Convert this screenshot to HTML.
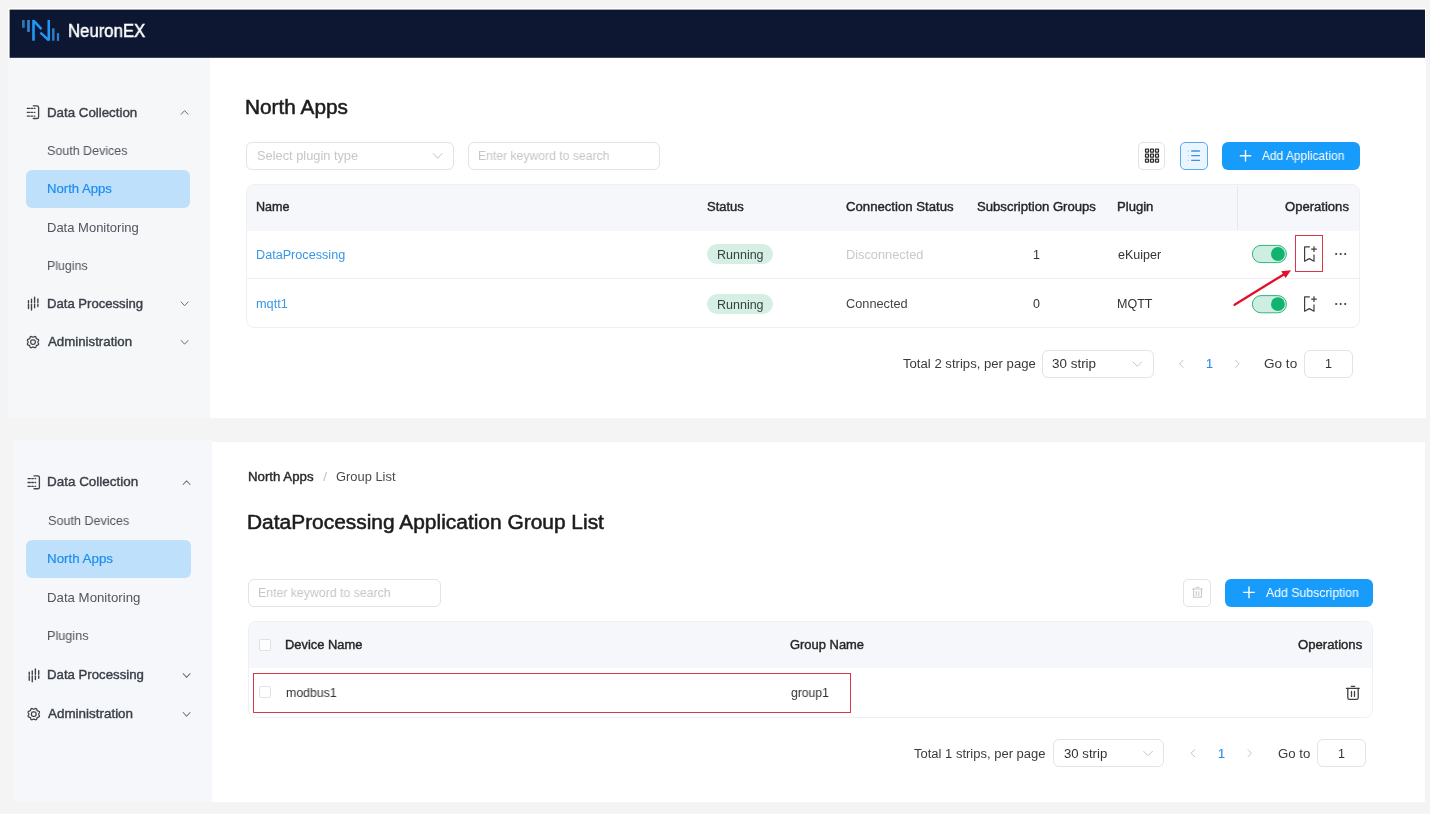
<!DOCTYPE html>
<html><head><meta charset="utf-8"><style>
html,body{margin:0;padding:0;width:1430px;height:814px;overflow:hidden;background:#f4f4f4;font-family:'Liberation Sans', sans-serif;}
.a{position:absolute;box-sizing:border-box;}
.t{position:absolute;white-space:nowrap;transform-origin:0 0;will-change:transform;}
svg{position:absolute;overflow:visible;}
</style></head><body>
<!-- panels -->
<div class="a" style="left:8px;top:8px;width:1418px;height:410px;background:#ffffff"></div>
<div class="a" style="left:8px;top:58px;width:202px;height:360px;background:#f5f7f9"></div>
<svg style="left:0;top:0" width="1430" height="60"><rect x="9.6" y="9.6" width="1415.4" height="48.2" fill="#0e1732"/></svg>
<div class="a" style="left:14px;top:440px;width:198px;height:362px;background:#f5f7fa"></div>
<div class="a" style="left:212px;top:442px;width:1213px;height:360px;background:#ffffff"></div>
<!-- logo -->
<svg style="left:0;top:0" width="80" height="60">
  <rect x="22.1" y="20" width="2.6" height="7.8" fill="#2d78b8"/>
  <rect x="27.1" y="20" width="2.8" height="11.9" fill="#2f7fcb"/>
  <rect x="32.2" y="20" width="2.6" height="20.7" fill="#1e98fb"/>
  <rect x="47.5" y="20" width="2.5" height="20.7" fill="#1e98fb"/>
  <path d="M33.8 20.8 L41.5 29.2" stroke="#1e98fb" stroke-width="2.5" fill="none"/>
  <path d="M40.4 32.6 L48.6 40.1" stroke="#1e98fb" stroke-width="2.5" fill="none"/>
  <rect x="52.1" y="28.3" width="2.4" height="12.4" fill="#2f7fcb"/>
  <rect x="56.9" y="33.1" width="2.2" height="7.8" fill="#2f7fcb"/>
</svg>

<!-- sidebar 1 -->
<div class="a" style="left:26px;top:170px;width:164px;height:38px;border-radius:6px;background:#bfe0fb"></div>
<!-- sidebar 2 -->
<div class="a" style="left:26px;top:540px;width:165px;height:38px;border-radius:6px;background:#bfe0fb"></div>

<!-- content 1 controls -->
<div class="a" style="left:246px;top:142px;width:208px;height:28px;border:1px solid #e2e3e5;border-radius:6px"></div>
<div class="a" style="left:468px;top:142px;width:192px;height:28px;border:1px solid #e2e3e5;border-radius:6px"></div>
<div class="a" style="left:1138px;top:142px;width:27px;height:27.5px;border:1px solid #e2e3e5;border-radius:5px"></div>
<div class="a" style="left:1180px;top:142px;width:27.5px;height:27.5px;border:1px solid #5aa9f4;border-radius:5px;background:#eaf5ff"></div>
<div class="a" style="left:1222px;top:142px;width:138px;height:27.5px;border-radius:6px;background:#189cfc"></div>

<!-- table 1 -->
<div class="a" style="left:245.5px;top:183.5px;width:1114px;height:144.5px;border:1px solid #eef0f3;border-radius:8px;overflow:hidden;background:#fff">
  <div class="a" style="left:0;top:0;width:100%;height:46px;background:#f5f7fa"></div>
  <div class="a" style="left:0;top:93.2px;width:100%;height:1px;background:#eceef2"></div>
  <div class="a" style="left:990.5px;top:1px;width:1px;height:44px;background:#e6e8ec"></div>
</div>
<div class="a" style="left:707px;top:244px;width:66px;height:20px;border-radius:10px;background:#d5efe4"></div>
<div class="a" style="left:707px;top:293.5px;width:66px;height:20px;border-radius:10px;background:#d5efe4"></div>

<!-- content 2 controls -->
<div class="a" style="left:248px;top:578.5px;width:193px;height:28px;border:1px solid #e2e3e5;border-radius:6px"></div>
<div class="a" style="left:1183px;top:578.5px;width:28px;height:28px;border:1px solid #e2e3e5;border-radius:5px"></div>
<div class="a" style="left:1225.4px;top:578.5px;width:147.6px;height:28px;border-radius:6px;background:#189cfc"></div>

<!-- table 2 -->
<div class="a" style="left:248.4px;top:621.2px;width:1124.2px;height:96.4px;border:1px solid #eef0f3;border-radius:8px;overflow:hidden;background:#fff">
  <div class="a" style="left:0;top:0;width:100%;height:46px;background:#f5f7fa"></div>
</div>
<div class="a" style="left:259.3px;top:638.5px;width:12px;height:12px;border:1px solid #dfe1e6;border-radius:2px;background:#fff"></div>
<div class="a" style="left:259.3px;top:686.3px;width:12px;height:12px;border:1px solid #dfe1e6;border-radius:2px;background:#fff"></div>

<!-- paginations -->
<div class="a" style="left:1042px;top:350px;width:111.5px;height:27.5px;border:1px solid #e2e3e5;border-radius:6px"></div>
<div class="a" style="left:1304px;top:350px;width:48.5px;height:27.5px;border:1px solid #e2e3e5;border-radius:6px"></div>
<div class="a" style="left:1053.4px;top:739.4px;width:111px;height:27.5px;border:1px solid #e2e3e5;border-radius:6px"></div>
<div class="a" style="left:1317.3px;top:739.4px;width:48.3px;height:27.5px;border:1px solid #e2e3e5;border-radius:6px"></div>

<!-- red annotation boxes -->
<div class="a" style="left:1295px;top:235px;width:28px;height:37px;border:1.3px solid #d63848"></div>
<div class="a" style="left:253.4px;top:672.8px;width:597.3px;height:40.5px;border:1.3px solid #d63848"></div>

<svg style="left:0px;top:0px" width="200" height="360" viewBox="0 0 200 360">
 <g fill="none" stroke="#3f444b" stroke-width="1.3" stroke-linecap="round">
  <path d="M33.3 105.8 H37 Q38.6 105.8 38.6 107.4 V116.9 Q38.6 118.5 37 118.5 H33.3"/>
  <path d="M27.3 108.4 H29.6 M31 108.4 H32.6 M34.2 108.4 H34.9 M27.3 112.3 H29.6 M31 112.3 H32.6 M34.2 112.3 H34.9 M27.3 116.1 H29.6 M31 116.1 H32.6 M34.2 116.1 H34.9"/>
  <path d="M28.5 300.6 V302.8 M28.5 304.3 V308.6 M31.5 299.3 V302.6 M31.5 304.1 V310 M34.6 297.3 V302.6 M34.6 304.1 V307.7 M37.9 299 V302.6 M37.9 304.1 V306.6" stroke-width="1.4"/>
  <path transform="translate(33 342.1)" d="M4.90 0.00 L4.96 0.33 L5.13 0.68 L5.35 1.06 L5.53 1.48 L5.61 1.90 L5.54 2.30 L5.32 2.62 L4.96 2.86 L4.53 3.03 L4.11 3.15 L3.74 3.28 L3.46 3.46 L3.28 3.74 L3.15 4.11 L3.03 4.53 L2.86 4.96 L2.62 5.32 L2.30 5.54 L1.90 5.61 L1.48 5.53 L1.06 5.35 L0.68 5.13 L0.33 4.96 L0.00 4.90 L-0.33 4.96 L-0.68 5.13 L-1.06 5.35 L-1.48 5.53 L-1.90 5.61 L-2.30 5.54 L-2.62 5.32 L-2.86 4.96 L-3.03 4.53 L-3.15 4.11 L-3.28 3.74 L-3.46 3.46 L-3.74 3.28 L-4.11 3.15 L-4.53 3.03 L-4.96 2.86 L-5.32 2.62 L-5.54 2.30 L-5.61 1.90 L-5.53 1.48 L-5.35 1.06 L-5.13 0.68 L-4.96 0.33 L-4.90 0.00 L-4.96 -0.33 L-5.13 -0.68 L-5.35 -1.06 L-5.53 -1.48 L-5.61 -1.90 L-5.54 -2.30 L-5.32 -2.62 L-4.96 -2.86 L-4.53 -3.03 L-4.11 -3.15 L-3.74 -3.28 L-3.46 -3.46 L-3.28 -3.74 L-3.15 -4.11 L-3.03 -4.53 L-2.86 -4.96 L-2.62 -5.32 L-2.30 -5.54 L-1.90 -5.61 L-1.48 -5.53 L-1.06 -5.35 L-0.68 -5.13 L-0.33 -4.96 L-0.00 -4.90 L0.33 -4.96 L0.68 -5.13 L1.06 -5.35 L1.48 -5.53 L1.90 -5.61 L2.30 -5.54 L2.62 -5.32 L2.86 -4.96 L3.03 -4.53 L3.15 -4.11 L3.28 -3.74 L3.46 -3.46 L3.74 -3.28 L4.11 -3.15 L4.53 -3.03 L4.96 -2.86 L5.32 -2.62 L5.54 -2.30 L5.61 -1.90 L5.53 -1.48 L5.35 -1.06 L5.13 -0.68 L4.96 -0.33 L4.90 -0.00Z"/>
  <rect x="30.7" y="339.8" width="4.6" height="4.6" rx="1.8"/>
 </g>
 <g fill="none" stroke="#6b7078" stroke-width="1" stroke-linecap="round" stroke-linejoin="round">
  <path d="M181.2 114.3 L184.6 110.6 L188 114.3"/>
  <path d="M181.2 302 L184.6 305.7 L188 302"/>
  <path d="M181.2 340.5 L184.6 344.2 L188 340.5"/>
 </g>
</svg>
<div class="a" style="left:0;top:0;width:220px;height:814px;transform-origin:0 0;transform:translate(0.5px,369.3px) scale(1.008)">
<svg style="left:0;top:0" width="200" height="360" viewBox="0 0 200 360">
 <g fill="none" stroke="#3f444b" stroke-width="1.3" stroke-linecap="round">
  <path d="M33.3 105.8 H37 Q38.6 105.8 38.6 107.4 V116.9 Q38.6 118.5 37 118.5 H33.3"/>
  <path d="M27.3 108.4 H29.6 M31 108.4 H32.6 M34.2 108.4 H34.9 M27.3 112.3 H29.6 M31 112.3 H32.6 M34.2 112.3 H34.9 M27.3 116.1 H29.6 M31 116.1 H32.6 M34.2 116.1 H34.9"/>
  <path d="M28.5 300.6 V302.8 M28.5 304.3 V308.6 M31.5 299.3 V302.6 M31.5 304.1 V310 M34.6 297.3 V302.6 M34.6 304.1 V307.7 M37.9 299 V302.6 M37.9 304.1 V306.6" stroke-width="1.4"/>
  <path transform="translate(33 342.1)" d="M4.90 0.00 L4.96 0.33 L5.13 0.68 L5.35 1.06 L5.53 1.48 L5.61 1.90 L5.54 2.30 L5.32 2.62 L4.96 2.86 L4.53 3.03 L4.11 3.15 L3.74 3.28 L3.46 3.46 L3.28 3.74 L3.15 4.11 L3.03 4.53 L2.86 4.96 L2.62 5.32 L2.30 5.54 L1.90 5.61 L1.48 5.53 L1.06 5.35 L0.68 5.13 L0.33 4.96 L0.00 4.90 L-0.33 4.96 L-0.68 5.13 L-1.06 5.35 L-1.48 5.53 L-1.90 5.61 L-2.30 5.54 L-2.62 5.32 L-2.86 4.96 L-3.03 4.53 L-3.15 4.11 L-3.28 3.74 L-3.46 3.46 L-3.74 3.28 L-4.11 3.15 L-4.53 3.03 L-4.96 2.86 L-5.32 2.62 L-5.54 2.30 L-5.61 1.90 L-5.53 1.48 L-5.35 1.06 L-5.13 0.68 L-4.96 0.33 L-4.90 0.00 L-4.96 -0.33 L-5.13 -0.68 L-5.35 -1.06 L-5.53 -1.48 L-5.61 -1.90 L-5.54 -2.30 L-5.32 -2.62 L-4.96 -2.86 L-4.53 -3.03 L-4.11 -3.15 L-3.74 -3.28 L-3.46 -3.46 L-3.28 -3.74 L-3.15 -4.11 L-3.03 -4.53 L-2.86 -4.96 L-2.62 -5.32 L-2.30 -5.54 L-1.90 -5.61 L-1.48 -5.53 L-1.06 -5.35 L-0.68 -5.13 L-0.33 -4.96 L-0.00 -4.90 L0.33 -4.96 L0.68 -5.13 L1.06 -5.35 L1.48 -5.53 L1.90 -5.61 L2.30 -5.54 L2.62 -5.32 L2.86 -4.96 L3.03 -4.53 L3.15 -4.11 L3.28 -3.74 L3.46 -3.46 L3.74 -3.28 L4.11 -3.15 L4.53 -3.03 L4.96 -2.86 L5.32 -2.62 L5.54 -2.30 L5.61 -1.90 L5.53 -1.48 L5.35 -1.06 L5.13 -0.68 L4.96 -0.33 L4.90 -0.00Z"/>
  <rect x="30.7" y="339.8" width="4.6" height="4.6" rx="1.8"/>
 </g>
 <g fill="none" stroke="#6b7078" stroke-width="1" stroke-linecap="round" stroke-linejoin="round">
  <path d="M181.2 114.3 L184.6 110.6 L188 114.3"/>
  <path d="M181.2 302 L184.6 305.7 L188 302"/>
  <path d="M181.2 340.5 L184.6 344.2 L188 340.5"/>
 </g>
</svg></div>

<svg style="left:0;top:0" width="1430" height="814">
 <!-- select chevron -->
 <g fill="none" stroke="#c0c4cc" stroke-width="1" stroke-linecap="round" stroke-linejoin="round">
  <path d="M433.3 153.6 L437.7 158.2 L442.1 153.6"/>
  <path d="M1133 362 L1137.3 366.3 L1141.6 362"/>
  <path d="M1143.8 751.4 L1148.1 755.7 L1152.4 751.4"/>
  <path d="M1183 360.2 L1179.6 363.8 L1183 367.4"/>
  <path d="M1235.6 360.2 L1239 363.8 L1235.6 367.4"/>
  <path d="M1194.6 749.6 L1191.2 753.2 L1194.6 756.8"/>
  <path d="M1248 749.6 L1251.4 753.2 L1248 756.8"/>
 </g>
 <!-- grid icon -->
 <g fill="none" stroke="#2b2b2b" stroke-width="1.25">
  <rect x="1145.5" y="149.1" width="3" height="3" rx="0.3"/><rect x="1150.5" y="149.1" width="3" height="3" rx="0.3"/><rect x="1155.5" y="149.1" width="3" height="3" rx="0.3"/>
  <rect x="1145.5" y="154.1" width="3" height="3" rx="0.3"/><rect x="1150.5" y="154.1" width="3" height="3" rx="0.3"/><rect x="1155.5" y="154.1" width="3" height="3" rx="0.3"/>
  <rect x="1145.5" y="159.1" width="3" height="3" rx="0.3"/><rect x="1150.5" y="159.1" width="3" height="3" rx="0.3"/><rect x="1155.5" y="159.1" width="3" height="3" rx="0.3"/>
 </g>
 <!-- list icon -->
 <g stroke="#3d90e2" stroke-width="1.3" fill="none">
  <path d="M1191.2 151 H1199.9 M1191.2 155.6 H1199.9 M1191.2 160.4 H1199.9"/>
  <path d="M1187.6 151 H1188.6 M1187.6 155.6 H1188.6 M1187.6 160.4 H1188.6" stroke="#9cc6ef"/>
 </g>
 <!-- plus icons -->
 <g stroke="#ffffff" stroke-width="1.4" fill="none">
  <path d="M1245.5 150 V161.4 M1239.8 155.7 H1251.2"/>
  <path d="M1249 586.6 V598.2 M1243.2 592.4 H1254.8"/>
 </g>
 <!-- switches -->
 <g>
  <rect x="1252.4" y="245.4" width="34" height="17.2" rx="8.6" fill="#cdeee0" stroke="#2fb77c" stroke-width="1"/>
  <circle cx="1277.9" cy="254" r="6.9" fill="#12b36f"/>
  <rect x="1252.4" y="295.6" width="34" height="17.2" rx="8.6" fill="#cdeee0" stroke="#2fb77c" stroke-width="1"/>
  <circle cx="1277.9" cy="304.2" r="6.9" fill="#12b36f"/>
 </g>
 <!-- bookmark icons -->
 <g fill="none" stroke="#3f3f3f" stroke-width="1.2" stroke-linejoin="round">
  <path d="M1309.8 246.9 H1304.6 V261.2 L1309.3 258.6 L1314 261.2 V254.6"/>
  <path d="M1314 246.3 V252 M1311.2 249.1 H1316.8"/>
  <path d="M1309.8 296.9 H1304.6 V311.2 L1309.3 308.6 L1314 311.2 V304.6"/>
  <path d="M1314 296.3 V302 M1311.2 299.1 H1316.8"/>
 </g>
 <!-- dots -->
 <g fill="#3a3a3a">
  <circle cx="1336.2" cy="254" r="1.1"/><circle cx="1340.7" cy="254" r="1.1"/><circle cx="1345.2" cy="254" r="1.1"/>
  <circle cx="1336.2" cy="304" r="1.1"/><circle cx="1340.7" cy="304" r="1.1"/><circle cx="1345.2" cy="304" r="1.1"/>
 </g>
 <!-- arrow -->
 <g>
  <path d="M1234.6 304.8 L1285 273.7" stroke="#e3102b" stroke-width="2.3" stroke-linecap="round"/>
  <path d="M1291 270.2 L1281.2 271.2 L1285.6 278 Z" fill="#e3102b"/>
 </g>
 <!-- trash icons -->
 <g fill="none" stroke="#404040" stroke-width="1.3" stroke-linecap="round" stroke-linejoin="round">
  <path d="M1346.4 688.4 H1359.2"/>
  <path d="M1351.3 686.3 H1354.7"/>
  <path d="M1347.8 688.4 V697.8 Q1347.8 699.4 1349.4 699.4 H1356.6 Q1358.2 699.4 1358.2 697.8 V688.4"/>
  <path d="M1351.5 691.4 V696.4 M1354.5 691.4 V696.4"/>
 </g>
 <g fill="none" stroke="#c6c8cc" stroke-width="1.1" stroke-linecap="round" stroke-linejoin="round">
  <path d="M1192.5 589 H1202.5"/>
  <path d="M1196 587.3 H1199"/>
  <path d="M1193.6 589 V597.3 H1201.4 V589"/>
  <path d="M1196.2 591.6 V595.4 M1198.8 591.6 V595.4"/>
 </g>
</svg>
<div class="t" style="left:67.79px;top:21.64px;font-size:18.5px;line-height:18.5px;color:#ffffff;-webkit-text-stroke:0.50px #ffffff;transform:scaleX(0.9043);">NeuronEX</div>
<div class="t" style="left:46.66px;top:105.70px;font-size:13px;line-height:13px;color:#3a3f47;-webkit-text-stroke:0.40px #3a3f47;transform:scaleX(1.0230);">Data Collection</div>
<div class="t" style="left:47.31px;top:143.80px;font-size:13px;line-height:13px;color:#50555c;transform:scaleX(0.9601);">South Devices</div>
<div class="t" style="left:46.87px;top:182.20px;font-size:13px;line-height:13px;color:#1d8cf0;-webkit-text-stroke:0.20px #1d8cf0;transform:scaleX(1.0093);">North Apps</div>
<div class="t" style="left:46.88px;top:220.50px;font-size:13px;line-height:13px;color:#50555c;">Data Monitoring</div>
<div class="t" style="left:46.93px;top:258.80px;font-size:13px;line-height:13px;color:#50555c;transform:scaleX(0.9511);">Plugins</div>
<div class="t" style="left:46.68px;top:296.90px;font-size:13px;line-height:13px;color:#3a3f47;-webkit-text-stroke:0.40px #3a3f47;transform:scaleX(1.0082);">Data Processing</div>
<div class="t" style="left:47.70px;top:335.40px;font-size:13px;line-height:13px;color:#3a3f47;-webkit-text-stroke:0.40px #3a3f47;transform:scaleX(1.0204);">Administration</div>
<div class="t" style="left:46.85px;top:475.00px;font-size:13px;line-height:13px;color:#3a3f47;-webkit-text-stroke:0.40px #3a3f47;transform:scaleX(1.0346);">Data Collection</div>
<div class="t" style="left:47.51px;top:513.50px;font-size:13px;line-height:13px;color:#50555c;transform:scaleX(0.9698);">South Devices</div>
<div class="t" style="left:46.86px;top:552.00px;font-size:13px;line-height:13px;color:#1d8cf0;-webkit-text-stroke:0.20px #1d8cf0;transform:scaleX(1.0266);">North Apps</div>
<div class="t" style="left:46.67px;top:590.80px;font-size:13px;line-height:13px;color:#50555c;transform:scaleX(1.0175);">Data Monitoring</div>
<div class="t" style="left:46.71px;top:629.30px;font-size:13px;line-height:13px;color:#50555c;transform:scaleX(0.9729);">Plugins</div>
<div class="t" style="left:46.67px;top:668.00px;font-size:13px;line-height:13px;color:#3a3f47;-webkit-text-stroke:0.40px #3a3f47;transform:scaleX(1.0157);">Data Processing</div>
<div class="t" style="left:47.70px;top:706.80px;font-size:13px;line-height:13px;color:#3a3f47;-webkit-text-stroke:0.40px #3a3f47;transform:scaleX(1.0326);">Administration</div>
<div class="t" style="left:244.97px;top:97.15px;font-size:20.5px;line-height:20.5px;color:#1c1c1c;-webkit-text-stroke:0.52px #1c1c1c;transform:scaleX(1.0149);">North Apps</div>
<div class="t" style="left:256.50px;top:150.22px;font-size:12.5px;line-height:12.5px;color:#c4c6ca;transform:scaleX(1.0248);">Select plugin type</div>
<div class="t" style="left:478.25px;top:149.82px;font-size:12.5px;line-height:12.5px;color:#c4c6ca;transform:scaleX(0.9752);">Enter keyword to search</div>
<div class="t" style="left:1262.10px;top:150.22px;font-size:12.5px;line-height:12.5px;color:#ffffff;transform:scaleX(0.9563);">Add Application</div>
<div class="t" style="left:255.72px;top:200.82px;font-size:12.5px;line-height:12.5px;color:#262626;-webkit-text-stroke:0.40px #262626;transform:scaleX(1.0044);">Name</div>
<div class="t" style="left:707.39px;top:200.82px;font-size:12.5px;line-height:12.5px;color:#262626;-webkit-text-stroke:0.40px #262626;transform:scaleX(1.0388);">Status</div>
<div class="t" style="left:846.28px;top:200.82px;font-size:12.5px;line-height:12.5px;color:#262626;-webkit-text-stroke:0.40px #262626;transform:scaleX(1.0527);">Connection Status</div>
<div class="t" style="left:977.39px;top:200.82px;font-size:12.5px;line-height:12.5px;color:#262626;-webkit-text-stroke:0.40px #262626;transform:scaleX(1.0501);">Subscription Groups</div>
<div class="t" style="left:1117.38px;top:200.82px;font-size:12.5px;line-height:12.5px;color:#262626;-webkit-text-stroke:0.40px #262626;transform:scaleX(1.0463);">Plugin</div>
<div class="t" style="left:1284.79px;top:200.82px;font-size:12.5px;line-height:12.5px;color:#262626;-webkit-text-stroke:0.40px #262626;transform:scaleX(1.0454);">Operations</div>
<div class="t" style="left:255.71px;top:248.72px;font-size:12.5px;line-height:12.5px;color:#3897e6;transform:scaleX(1.0109);">DataProcessing</div>
<div class="t" style="left:717.03px;top:249.12px;font-size:12.5px;line-height:12.5px;color:#36433c;">Running</div>
<div class="t" style="left:845.90px;top:248.72px;font-size:12.5px;line-height:12.5px;color:#c9c9c9;transform:scaleX(1.0221);">Disconnected</div>
<div class="t" style="left:1033.09px;top:248.72px;font-size:12.5px;line-height:12.5px;color:#333;">1</div>
<div class="t" style="left:1118.01px;top:248.72px;font-size:12.5px;line-height:12.5px;color:#333;transform:scaleX(0.9945);">eKuiper</div>
<div class="t" style="left:255.91px;top:297.92px;font-size:12.5px;line-height:12.5px;color:#3897e6;transform:scaleX(1.0175);">mqtt1</div>
<div class="t" style="left:717.03px;top:298.52px;font-size:12.5px;line-height:12.5px;color:#36433c;">Running</div>
<div class="t" style="left:846.30px;top:297.92px;font-size:12.5px;line-height:12.5px;color:#444;transform:scaleX(1.0207);">Connected</div>
<div class="t" style="left:1033.08px;top:297.92px;font-size:12.5px;line-height:12.5px;color:#333;">0</div>
<div class="t" style="left:1117.43px;top:297.92px;font-size:12.5px;line-height:12.5px;color:#333;transform:scaleX(0.9908);">MQTT</div>
<div class="t" style="left:902.59px;top:357.62px;font-size:12.5px;line-height:12.5px;color:#3a3a3a;transform:scaleX(1.0504);">Total 2 strips, per page</div>
<div class="t" style="left:1052.48px;top:357.62px;font-size:12.5px;line-height:12.5px;color:#333;transform:scaleX(1.0750);">30 strip</div>
<div class="t" style="left:1205.89px;top:357.62px;font-size:12.5px;line-height:12.5px;color:#2b8fe8;-webkit-text-stroke:0.20px #2b8fe8;">1</div>
<div class="t" style="left:1264.36px;top:357.62px;font-size:12.5px;line-height:12.5px;color:#3a3a3a;transform:scaleX(1.0855);">Go to</div>
<div class="t" style="left:1324.69px;top:357.62px;font-size:12.5px;line-height:12.5px;color:#333;">1</div>
<div class="t" style="left:247.77px;top:471.22px;font-size:12.5px;line-height:12.5px;color:#2a2a2a;-webkit-text-stroke:0.40px #2a2a2a;transform:scaleX(1.0595);">North Apps</div>
<div class="t" style="left:323.10px;top:471.22px;font-size:12.5px;line-height:12.5px;color:#c0c4cc;transform:scaleX(1.2000);">/</div>
<div class="t" style="left:336.30px;top:471.22px;font-size:12.5px;line-height:12.5px;color:#4a4a4a;transform:scaleX(1.0311);">Group List</div>
<div class="t" style="left:247.27px;top:512.07px;font-size:20.0px;line-height:20.0px;color:#1c1c1c;-webkit-text-stroke:0.52px #1c1c1c;transform:scaleX(1.0457);">DataProcessing Application Group List</div>
<div class="t" style="left:257.54px;top:586.62px;font-size:12.5px;line-height:12.5px;color:#c4c6ca;transform:scaleX(0.9842);">Enter keyword to search</div>
<div class="t" style="left:1265.80px;top:586.92px;font-size:12.5px;line-height:12.5px;color:#ffffff;transform:scaleX(0.9830);">Add Subscription</div>
<div class="t" style="left:285.29px;top:638.82px;font-size:12.5px;line-height:12.5px;color:#262626;-webkit-text-stroke:0.40px #262626;transform:scaleX(1.0321);">Device Name</div>
<div class="t" style="left:790.39px;top:638.82px;font-size:12.5px;line-height:12.5px;color:#262626;-webkit-text-stroke:0.40px #262626;transform:scaleX(1.0346);">Group Name</div>
<div class="t" style="left:1297.58px;top:638.82px;font-size:12.5px;line-height:12.5px;color:#262626;-webkit-text-stroke:0.40px #262626;transform:scaleX(1.0504);">Operations</div>
<div class="t" style="left:285.53px;top:687.02px;font-size:12.5px;line-height:12.5px;color:#333;transform:scaleX(0.9854);">modbus1</div>
<div class="t" style="left:790.62px;top:686.82px;font-size:12.5px;line-height:12.5px;color:#333;transform:scaleX(0.9730);">group1</div>
<div class="t" style="left:914.00px;top:748.02px;font-size:12.5px;line-height:12.5px;color:#3a3a3a;transform:scaleX(1.0401);">Total 1 strips, per page</div>
<div class="t" style="left:1063.99px;top:748.02px;font-size:12.5px;line-height:12.5px;color:#333;transform:scaleX(1.0550);">30 strip</div>
<div class="t" style="left:1217.59px;top:748.02px;font-size:12.5px;line-height:12.5px;color:#2b8fe8;-webkit-text-stroke:0.20px #2b8fe8;">1</div>
<div class="t" style="left:1277.78px;top:748.02px;font-size:12.5px;line-height:12.5px;color:#3a3a3a;transform:scaleX(1.0550);">Go to</div>
<div class="t" style="left:1337.69px;top:748.02px;font-size:12.5px;line-height:12.5px;color:#333;">1</div>
</body></html>
